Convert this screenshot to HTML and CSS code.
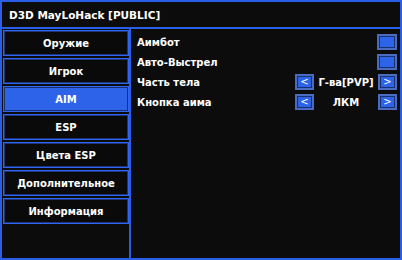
FILE: index.html
```html
<!DOCTYPE html>
<html>
<head>
<meta charset="utf-8">
<link rel="stylesheet" href="styles.css">
</head>
<body>
<div class="win">
  <div class="title">D3D MayLoHack [PUBLIC]</div>
  <div class="main">
    <nav class="side">
      <div class="btn">Оружие</div>
      <div class="btn">Игрок</div>
      <div class="btn active">AIM</div>
      <div class="btn">ESP</div>
      <div class="btn">Цвета ESP</div>
      <div class="btn">Дополнительное</div>
      <div class="btn">Информация</div>
    </nav>
    <section class="content">
      <div class="row"><span class="label">Аимбот</span><span class="box"></span></div>
      <div class="row"><span class="label">Авто-Выстрел</span><span class="box"></span></div>
      <div class="row"><span class="label">Часть тела</span>
        <span class="picker"><span class="arr">&lt;</span><span class="val">Г-ва[PVP]</span><span class="arr">&gt;</span></span></div>
      <div class="row"><span class="label">Кнопка аима</span>
        <span class="picker"><span class="arr">&lt;</span><span class="val">ЛКМ</span><span class="arr">&gt;</span></span></div>
    </section>
  </div>
</div>
</body>
</html>
```
FILE: styles.css
```css
* { box-sizing: border-box; }
html, body { margin: 0; padding: 0; background: #0c0c0c; }
body { font-family: "DejaVu Sans", sans-serif; font-weight: bold; font-size: 10px; color: #fff; }
.win {
  width: 402px; height: 260px;
  border: 2px solid #2a5ee8;
  background: #0c0c0c;
  display: flex; flex-direction: column;
}
.title {
  height: 27px;
  border-bottom: 2px solid #2a5ee8;
  padding-left: 7px;
  display: flex; align-items: center;
  font-size: 10.5px;
}
.main { flex: 1; display: flex; min-height: 0; }
.side {
  width: 129px;
  border-right: 2px solid #2a5ee8;
  padding: 1px 0 0 1px;
  display: flex; flex-direction: column; gap: 2px;
}
.btn {
  height: 26px;
  width: 126px;
  border: 1px solid #2f66f2;
  box-shadow: inset 0 0 0 1px #1d3478;
  background: #0a0a0a;
  display: flex; align-items: center; justify-content: center;
}
.btn.active {
  background: #2d63e8;
  border-color: #2f66f2;
  box-shadow: inset 0 0 0 1px #1a2f6e;
}
.content { flex: 1; padding: 3px 3px 0 6px; }
.row { height: 20px; display: flex; align-items: center; justify-content: space-between; }
.box {
  width: 20px; height: 16px;
  background: #2d63e8;
  border: 2px solid #4a6cc0;
  box-shadow: inset 0 0 0 1px #1a2f6e;
}
.picker { display: flex; align-items: center; }
.arr {
  width: 19px; height: 16px;
  background: #2d63e8;
  border: 2px solid #4a6cc0;
  box-shadow: inset 0 0 0 1px #1a2f6e;
  display: flex; align-items: center; justify-content: center;
  font-weight: normal; font-size: 10px; line-height: 1;
}
.val { width: 64px; text-align: center; }
```
